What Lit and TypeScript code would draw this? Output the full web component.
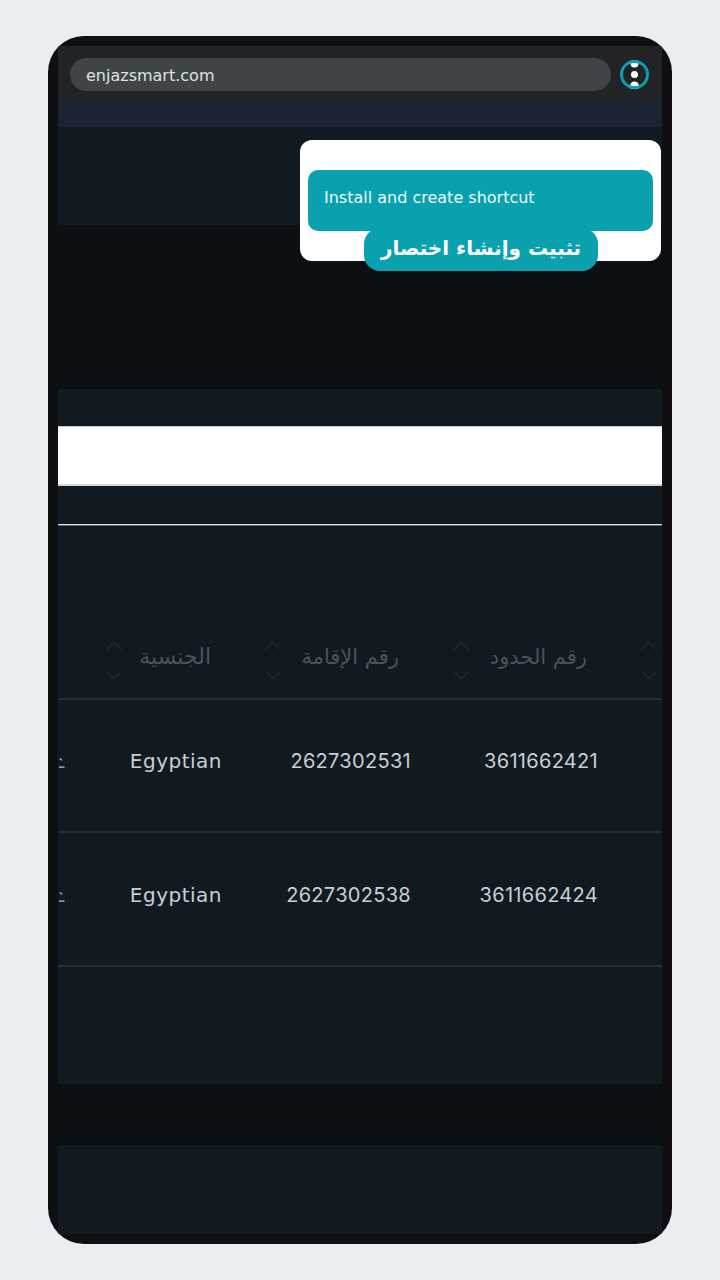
import { LitElement, html, css, svg } from "lit";
import { customElement } from "lit/decorators.js";

const sortIcon = svg`<svg class="sort" width="18" height="38" viewBox="0 0 18 38" fill="none" stroke="#232a33" stroke-width="1.2"><path d="M1.5 8.5 9 1.5 16.5 8.5"/><path d="M1.5 30.5 9 37.5 16.5 30.5"/></svg>`;
const fragment = svg`<svg class="frag" width="7" height="12" viewBox="0 0 7 12"><path d="M1 1.5h2.5l1 2H3z" fill="#aeb4bb"/><path d="M1 9.5h5.5v1.2H1z" fill="#c9ced5"/></svg>`;

@customElement("app-root")
export class AppRoot extends LitElement {
  static styles = css`
    :host { display: block; width: 720px; height: 1280px; background: #e8eef2; font-family: "DejaVu Sans", sans-serif; padding: 36px 48px; box-sizing: border-box; }
    .phone { position: relative; height: 1208px; border-radius: 36px; background: #0e0f12; padding: 10px; box-sizing: border-box; overflow: hidden; display: flex; flex-direction: column; }
    .chrome { height: 55px; flex: none; background: #212326; display: flex; align-items: center; padding: 0 13px 0 12px; gap: 9px; }
    .url { flex: 1; height: 33px; border-radius: 17px; background: #3f4447; color: #dfe2e4; font-size: 16px; line-height: 35px; padding-left: 16px; margin-top: 2px; }
    .logo { display: block; margin-top: 2px; }
    .strip { height: 26px; flex: none; background: #1c2331; }
    .top { height: 98px; flex: none; background: #121a21; }
    .dark { flex: none; background: #0b1014; }
    .d1 { height: 164px; }
    .d2 { height: 61px; }
    .panel { height: 695px; flex: none; background: #121a21; display: flex; flex-direction: column; overflow: hidden; }
    .spacer1 { height: 37px; flex: none; }
    .white { height: 60px; flex: none; background: #fff; border-top: 1px solid #c9ccd3; border-bottom: 2px solid #d5d7dd; box-sizing: border-box; }
    .spacer2 { height: 38px; flex: none; }
    .line { height: 1px; flex: none; background: #e2e4e8; border-bottom: 1px solid #5d616b; }
    .head { height: 174px; flex: none; border-bottom: 2px solid #262e38; box-sizing: border-box; display: grid; grid-template-columns: 159px 188px 188px 1fr; align-items: end; padding: 0 0 19px 47px; }
    .hcell { display: flex; align-items: center; justify-content: space-between; padding-right: 53px; height: 38px; }
    .sort { display: block; flex: none; }
    .label { font-size: 21px; color: #50505c; line-height: 30px; padding-bottom: 6px; white-space: nowrap; }
    .wide { font-size: 22px; }
    .row { height: 134px; flex: none; border-bottom: 2px solid #262e38; box-sizing: border-box; color: #c9ced5; display: grid; grid-template-columns: 164px 189px 187px; align-items: center; padding-bottom: 8px; }
    .head + .row { height: 133px; padding-bottom: 9px; }
    .first { display: flex; align-items: center; justify-content: space-between; }
    .frag { display: block; margin-top: 4px; }
    .nat { font-size: 20px; letter-spacing: 0.5px; white-space: nowrap; }
    .num { font-family: Inter, "DejaVu Sans", sans-serif; font-size: 20px; letter-spacing: 0.3px; text-align: right; white-space: nowrap; }
    .bottom { flex: 1; }
    .rest { flex: 1; background: #121a21; }
    .popup { position: absolute; left: 252px; top: 104px; width: 361px; height: 121px; background: #fff; border-radius: 12px; }
    .msg { position: absolute; left: 8px; right: 8px; top: 30px; height: 61px; background: #09a1ae; border-radius: 10px; color: #eef9fa; font-size: 16px; line-height: 56px; padding-left: 16px; }
    .btn { position: absolute; left: 64px; top: 88px; width: 234px; height: 43px; background: #09a1ae; border-radius: 16px; color: #fff; font-weight: 700; font-size: 20px; line-height: 41px; text-align: center; }
  `;

  private row(a: string, b: string) {
    return html`<div class="row">
      <div class="first">${fragment}<span class="nat">Egyptian</span></div>
      <div class="num">${a}</div>
      <div class="num">${b}</div>
    </div>`;
  }

  render() {
    const heads: [string, boolean][] = [["الجنسية", true], ["رقم الإقامة", false], ["رقم الحدود", false]];
    return html`<div class="phone">
      <div class="chrome">
        <div class="url">enjazsmart.com</div>
        <svg class="logo" width="29" height="29" viewBox="0 0 29 29">
          <circle cx="14.5" cy="3.5" r="4" fill="#fff"/>
          <circle cx="14.5" cy="26" r="4.5" fill="#fff"/>
          <circle cx="14.5" cy="14.5" r="3.5" fill="#fff"/>
          <circle cx="14.5" cy="14.5" r="13" fill="none" stroke="#09a1ae" stroke-width="3"/>
        </svg>
      </div>
      <div class="strip"></div>
      <div class="top"></div>
      <div class="dark d1"></div>
      <div class="panel">
        <div class="spacer1"></div>
        <div class="white"></div>
        <div class="spacer2"></div>
        <div class="line"></div>
        <div class="head">
          ${heads.map(([t, wide]) => html`<div class="hcell">${sortIcon}<span class="label ${wide ? "wide" : ""}" dir="rtl">${t}</span></div>`)}
          <div class="hcell">${sortIcon}</div>
        </div>
        ${this.row("2627302531", "3611662421")}
        ${this.row("2627302538", "3611662424")}
        <div class="bottom"></div>
      </div>
      <div class="dark d2"></div>
      <div class="rest"></div>
      <div class="popup">
        <div class="msg">Install and create shortcut</div>
        <div class="btn" dir="rtl">تثبيت وإنشاء اختصار</div>
      </div>
    </div>`;
  }
}
